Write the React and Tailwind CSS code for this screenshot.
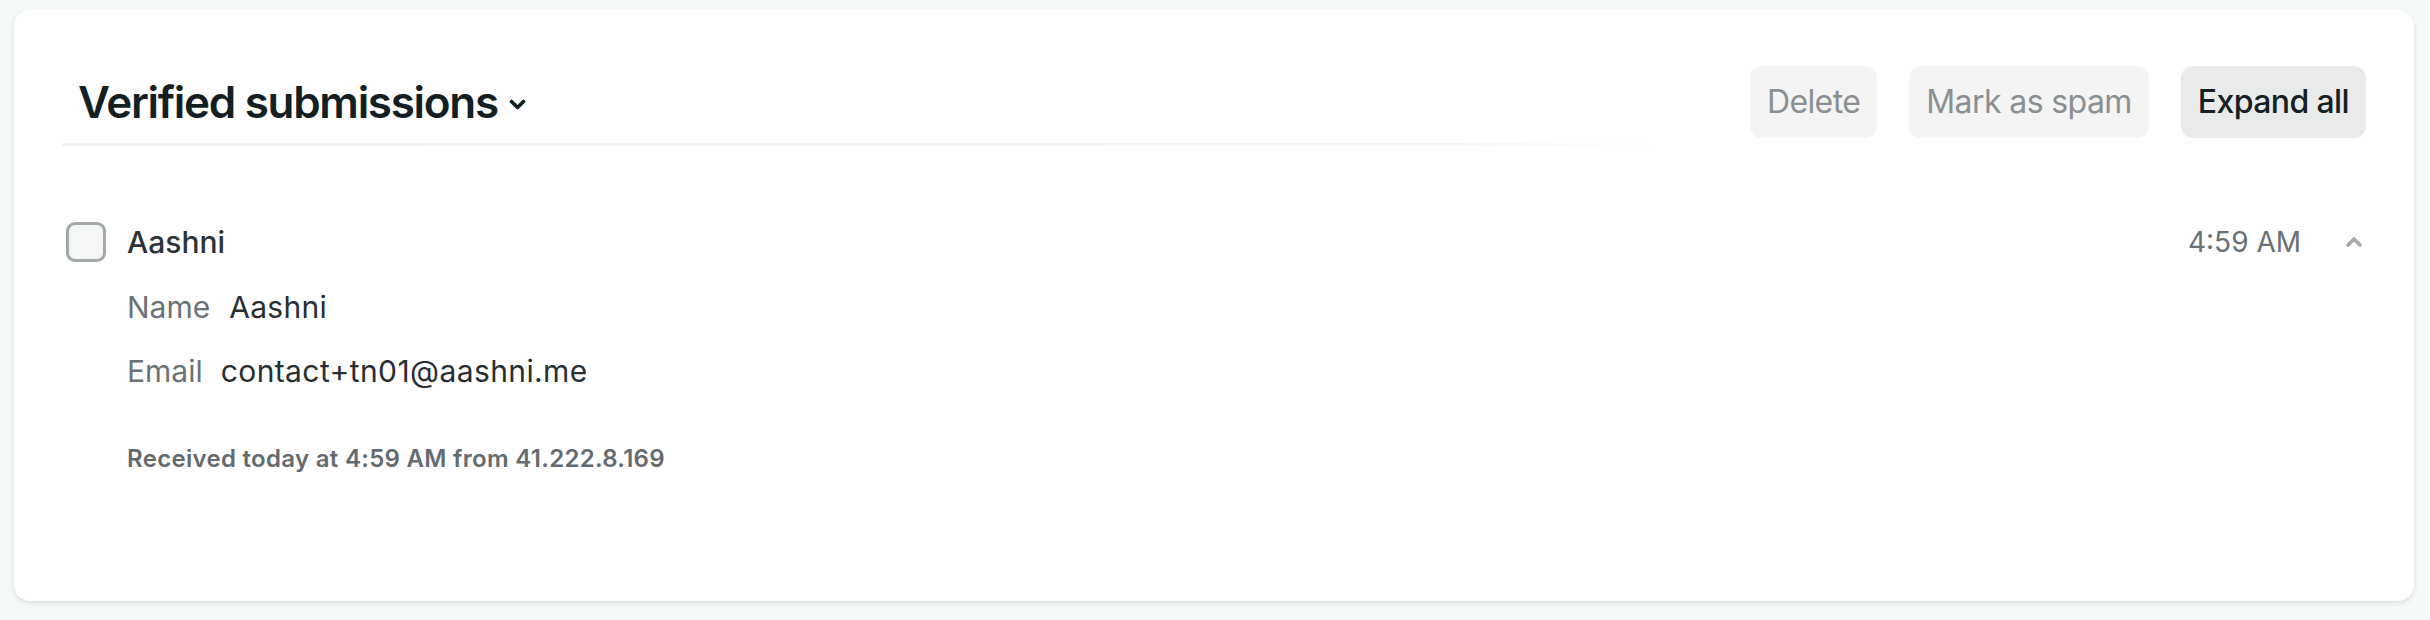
import { useState } from 'react';

export default function App() {
  const [checked, setChecked] = useState(false);
  const [open, setOpen] = useState(true);

  return (
    <div className="min-h-[620px] w-full bg-[#f6f9fa] pt-[10px] pl-[14px] font-['Inter',sans-serif]">
      <div className="w-[2400px] h-[591px] bg-white rounded-2xl shadow-[0_2px_5px_rgba(40,60,60,0.14)] px-12 pt-[56px]">
        {/* Header */}
        <div className="flex items-start">
          <div className="flex-1 flex flex-col">
            <div className="h-[72px] flex items-center pl-4">
              <h2 className="text-[44px] font-semibold text-[#141f23] tracking-[-1.3px]">Verified submissions</h2>
              <svg className="ml-[11px] mt-[6px]" width="17" height="12" viewBox="0 0 17 12" fill="none">
                <path d="M2.5 2.5 L8.5 8.5 L14.5 2.5" stroke="#141f23" strokeWidth="3.6" strokeLinecap="round" strokeLinejoin="round" />
              </svg>
            </div>
            <div className="mt-[5px] h-[3px] bg-gradient-to-r from-[#f2f4f4] via-[#f3f5f5] via-85% to-transparent" />
          </div>
          <div className="flex gap-8 ml-[94px]">
            <button className="h-[72px] px-[17px] rounded-xl bg-[#f4f4f4] text-[32px] tracking-[-0.6px] text-[#899091]">Delete</button>
            <button className="h-[72px] px-[17px] rounded-xl bg-[#f4f4f4] text-[32px] tracking-[-0.6px] text-[#899091]">Mark as spam</button>
            <button className="h-[72px] px-[17px] rounded-xl bg-[#e9ebeb] text-[32px] tracking-[-0.6px] font-medium text-[#152024]">Expand all</button>
          </div>
        </div>

        {/* Submission */}
        <div className="mt-[76px]">
          <div className="flex items-center h-10">
            <button
              onClick={() => setChecked(!checked)}
              className="ml-1 w-10 h-10 rounded-[9px] border-[3px] border-[#a3a9a9] bg-[#f4f6f6]"
            />
            <span className="ml-[21px] text-[30px] font-medium text-[#2a3337]">Aashni</span>
            <span className="ml-auto text-[28px] text-[#687074]">4:59 AM</span>
            <button onClick={() => setOpen(!open)} className="ml-[44px] mr-[3px] flex items-center">
              <svg width="18" height="12" viewBox="0 0 18 12" fill="none">
                <path d="M3 9 L9 3 L15 9" stroke="#a4aaab" strokeWidth="3.6" strokeLinecap="round" strokeLinejoin="round" />
              </svg>
            </button>
          </div>

          {open && (
            <div className="pl-[65px] mt-[13px]">
              <div className="text-[30px] leading-[64px] text-[#6a7276]">
                Name<span className="ml-[19px] text-[#272f33] tracking-[0.3px]">Aashni</span>
              </div>
              <div className="text-[30px] leading-[64px] text-[#6a7276]">
                Email<span className="ml-[18px] text-[#272f33] tracking-[0.4px]">contact+tn01@aashni.me</span>
              </div>
              <p className="mt-[40px] text-[24px] leading-[32px] font-semibold tracking-[0.3px] text-[#646b70]">
                Received today at 4:59 AM from 41.222.8.169
              </p>
            </div>
          )}
        </div>
      </div>
    </div>
  );
}
